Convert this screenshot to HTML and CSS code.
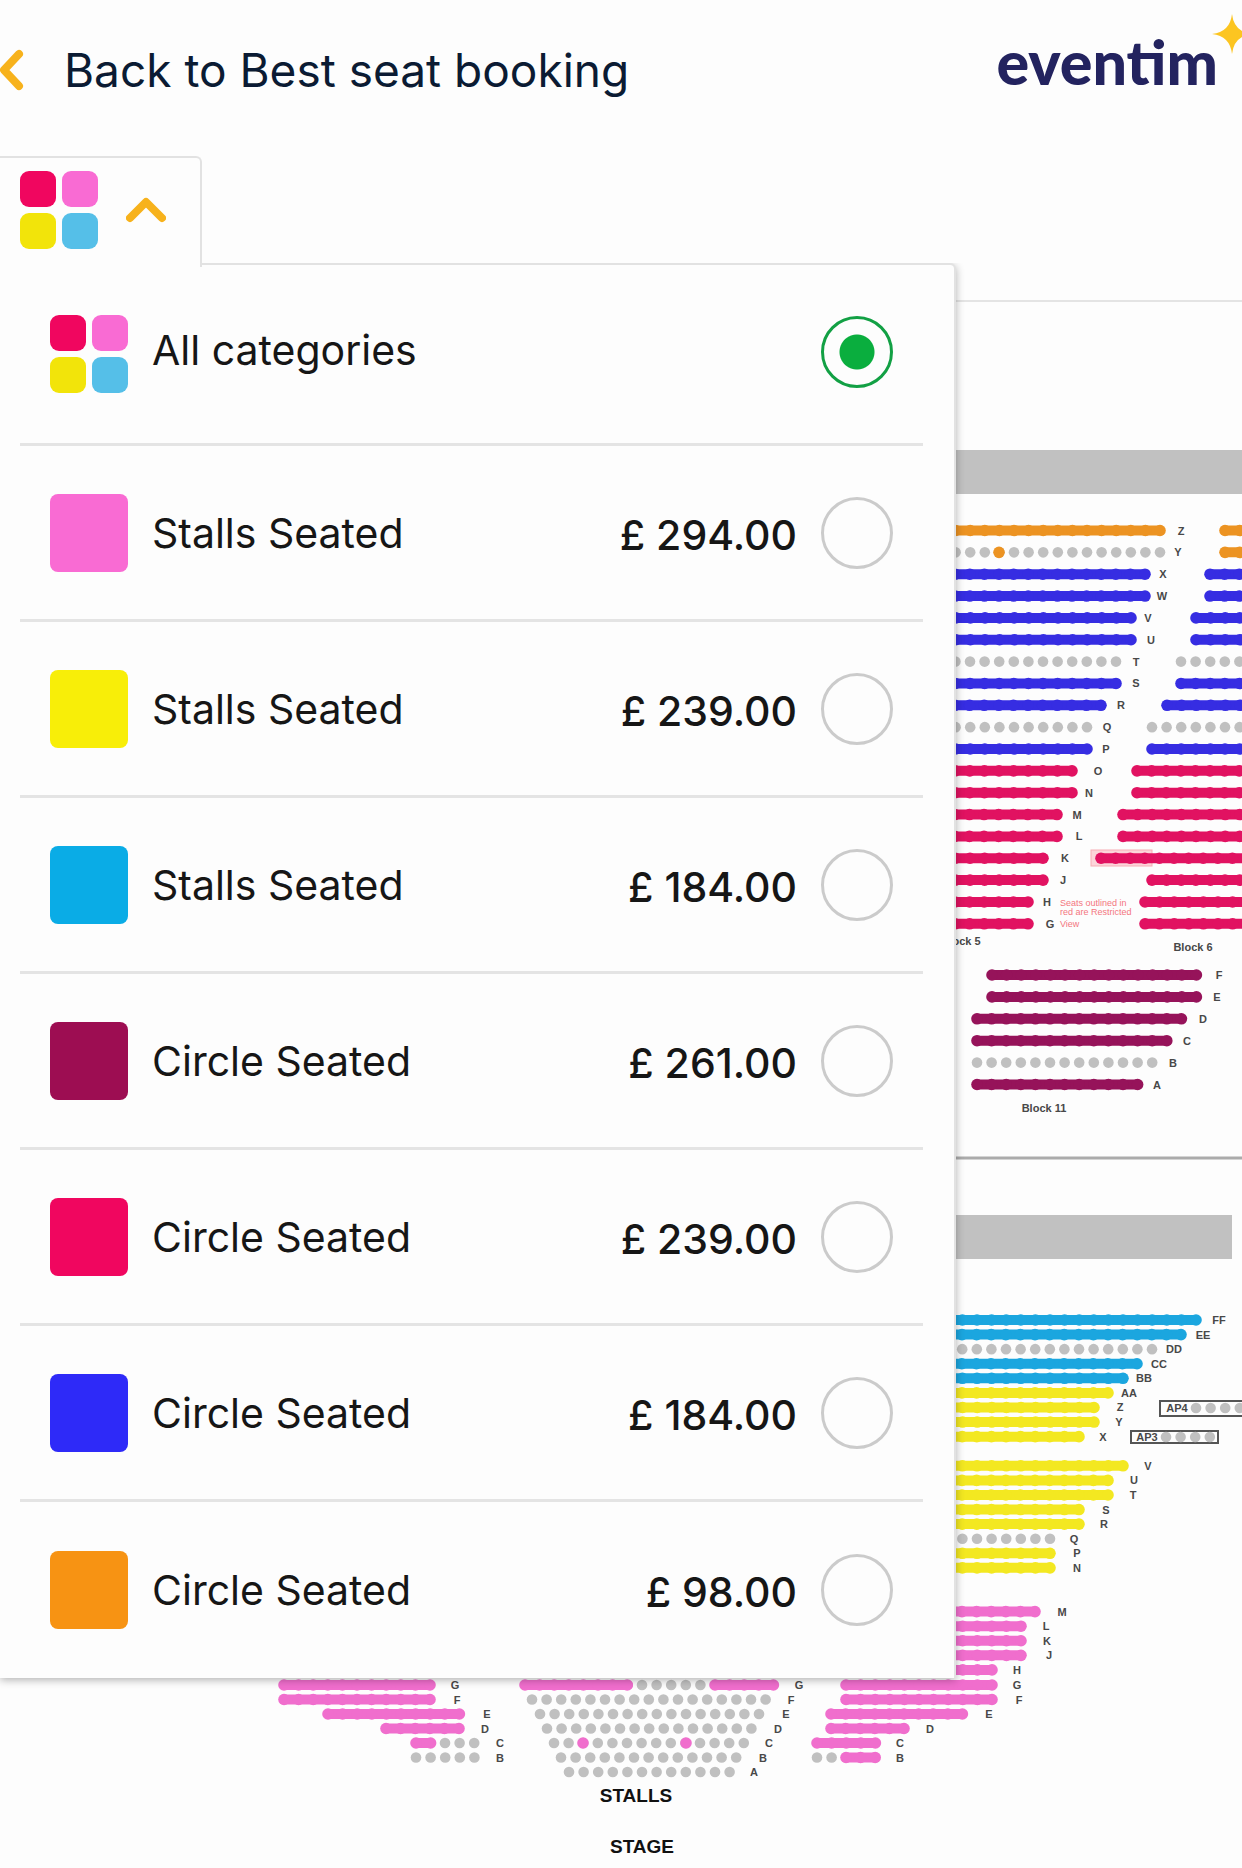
FILE: index.html
```html
<!DOCTYPE html>
<html lang="en">
<head>
<meta charset="utf-8">
<meta name="viewport" content="width=device-width, initial-scale=1">
<title>Seat map – eventim</title>
<link rel="stylesheet" href="styles.css">
</head>
<body>
<header class="header">
  <a class="back" href="#">
    <svg class="back-icon" viewBox="0 0 24 44" aria-hidden="true"><path d="M19 6 4 22 19 38"/></svg>
    <span>Back to Best seat booking</span>
  </a>
  <a class="logo" href="#">eventim<svg class="logo-star" viewBox="0 0 40 40" aria-hidden="true"><path d="M20 0Q22 18 40 20Q22 22 20 40Q18 22 0 20Q18 18 20 0Z"/></svg></a>
</header>
<main>
  <div class="toolbar">
    <button class="tab" type="button" aria-expanded="true" aria-controls="categories" aria-label="Price categories">
      <span class="quad"><i class="crimson"></i><i class="pink"></i><i class="lemon"></i><i class="sky"></i></span>
      <svg class="tab-icon" viewBox="0 0 40 26" aria-hidden="true"><path d="M4 21 20 5 36 21"/></svg>
    </button>
    <form class="menu" id="categories">
      <label class="option"><span class="quad"><i class="crimson"></i><i class="pink"></i><i class="lemon"></i><i class="sky"></i></span><span class="name">All categories</span><input type="radio" name="category" checked></label>
      <label class="option"><span class="swatch pink"></span><span class="name">Stalls Seated</span><span class="price">£ 294.00</span><input type="radio" name="category"></label>
      <label class="option"><span class="swatch yellow"></span><span class="name">Stalls Seated</span><span class="price">£ 239.00</span><input type="radio" name="category"></label>
      <label class="option"><span class="swatch blue"></span><span class="name">Stalls Seated</span><span class="price">£ 184.00</span><input type="radio" name="category"></label>
      <label class="option"><span class="swatch plum"></span><span class="name">Circle Seated</span><span class="price">£ 261.00</span><input type="radio" name="category"></label>
      <label class="option"><span class="swatch crimson"></span><span class="name">Circle Seated</span><span class="price">£ 239.00</span><input type="radio" name="category"></label>
      <label class="option"><span class="swatch indigo"></span><span class="name">Circle Seated</span><span class="price">£ 184.00</span><input type="radio" name="category"></label>
      <label class="option"><span class="swatch orange"></span><span class="name">Circle Seated</span><span class="price">£ 98.00</span><input type="radio" name="category"></label>
    </form>
  </div>
  <svg class="map" id="map" viewBox="0 302 1242 1566" role="img" aria-label="Seating plan">
    <rect class="block" x="300" y="450" width="942" height="44"/>
    <rect class="block" x="40" y="1215" width="1192" height="44"/>
    <path class="divider" d="M0 1158H1242"/>
    <rect class="restricted" x="1091" y="850" width="61" height="16"/>
    <rect class="box" x="1160" y="1401" width="90" height="15"/>
    <rect class="box" x="1131" y="1431" width="87" height="12"/>
    <g id="seats"></g>
    <g class="note"><text x="1060" y="906">Seats outlined in</text><text x="1060" y="915">red are Restricted</text><text x="1060" y="927">View</text></g>
    <g class="area"><text x="961" y="945">Block 5</text><text x="1193" y="951">Block 6</text><text x="1044" y="1112">Block 11</text></g>
    <g class="level"><text x="636" y="1802">STALLS</text><text x="642" y="1853">STAGE</text></g>
  </svg>
</main>
<script src="map.js"></script>
</body>
</html>
```
FILE: styles.css
```css
* { box-sizing: border-box; }

body {
  margin: 0;
  background: #fdfdfd;
  color: #161616;
  font-family: Inter, "Liberation Sans", sans-serif;
  overflow-x: hidden;
}

.header {
  display: flex;
  align-items: center;
  justify-content: space-between;
  height: 156px;
  padding: 0 24px 16px 0;
}

.back {
  display: flex;
  align-items: center;
  gap: 40px;
  color: #0b1b33;
  font-size: 46px;
  line-height: 56px;
  text-decoration: none;
}

.back-icon { width: 24px; height: 44px; }

.back-icon path,
.tab-icon path {
  fill: none;
  stroke: #f7b21c;
  stroke-width: 8;
  stroke-linecap: round;
  stroke-linejoin: round;
}

.logo {
  position: relative;
  margin-bottom: 16px;
  color: #23235f;
  font: 900 61px/72px Lato, sans-serif;
  text-decoration: none;
}

.logo-star {
  position: absolute;
  top: -12px;
  right: -34px;
  width: 40px;
  height: 40px;
  fill: #fcc521;
}

.toolbar {
  position: relative;
  z-index: 1;
  height: 146px;
  border-bottom: 2px solid #e4e4e4;
}

.tab {
  position: relative;
  z-index: 1;
  display: flex;
  align-items: center;
  gap: 28px;
  width: 202px;
  height: 111px;
  padding: 0 0 6px 20px;
  border: solid #e2e2e2;
  border-width: 2px 2px 0 0;
  border-radius: 0 6px 0 0;
  background: #fdfdfd;
}

.tab-icon { width: 40px; height: 26px; }

.quad {
  display: grid;
  grid-template-columns: 36px 36px;
  grid-auto-rows: 36px;
  gap: 6px;
}

.quad i { border-radius: 9px; }

.menu {
  position: absolute;
  top: 107px;
  left: 0;
  width: 956px;
  max-width: 100%;
  padding: 0 31px 0 20px;
  border: solid #e2e2e2;
  border-width: 2px 2px 0 0;
  border-radius: 0 6px 0 0;
  background: #fdfdfd;
  box-shadow: 0 2px 8px rgba(0, 0, 0, 0.3);
  clip-path: inset(0 -12px -12px 0);
}

.option {
  display: flex;
  align-items: center;
  height: 176px;
  padding: 0 30px;
  border-bottom: 3px solid #e4e4e4;
  font-size: 41px;
  line-height: 48px;
}

.option:first-child { height: 181px; }
.option:first-child .name { padding-bottom: 8px; }
.option:first-child input { margin-bottom: 4px; }
.option:last-child { border-bottom: 0; }

.swatch { width: 78px; height: 78px; border-radius: 8px; }

.name { flex: 1; padding-left: 24px; }

.price { padding-top: 4px; font-weight: 500; }

.option input {
  appearance: none;
  width: 72px;
  height: 72px;
  margin: 0 0 0 24px;
  border: 3px solid #cbcbcb;
  border-radius: 50%;
}

.option input:checked {
  border-color: #12a044;
  background: radial-gradient(circle, #0aae3e 17px, transparent 18px);
}

.crimson { background: #f0065f; }
.pink { background: #f96bd3; }
.lemon { background: #f2e40a; }
.sky { background: #55bfe8; }
.yellow { background: #f8ee08; }
.blue { background: #0aace6; }
.plum { background: #9d0d52; }
.indigo { background: #2e2af8; }
.orange { background: #f79313; }

.map { display: block; width: 100%; height: auto; }
.block { fill: #c1c1c1; }
.divider { stroke: #ababab; stroke-width: 3; }
.restricted { fill: #fcd5da; stroke: #f7aeb6; }
.box { fill: #fdfdfd; stroke: #555; stroke-width: 2; }

.row { fill: none; stroke-linecap: round; }

.map text { font-family: "Liberation Sans", Arial, sans-serif; }
.seat-label { fill: #484848; font-size: 11px; font-weight: 700; text-anchor: middle; }
.note { fill: #f47680; font-size: 9px; }
.area { fill: #484848; font-size: 11px; font-weight: 700; text-anchor: middle; }
.level { fill: #111; font-size: 19px; font-weight: 700; text-anchor: middle; }
```
FILE: map.js
```js
const PITCH = 14.6;
const COLORS = {
  o: '#ec9322', b: '#362de2', c: '#e11261', p: '#96135a',
  s: '#1ba6df', y: '#f3e821', k: '#f06ecd', g: '#c0c0c0'
};

// Runs of seats: colour, centre of first seat, centre of last seat, y
const runs = [];
// Row letters: text, centre x, centre y
const labels = [];

// Circle: colour, letter, last seat left of the aisle, letter x, first seat right of it
[
  ['o', 'Z', 1160, 1181, 1225], ['g', 'Y', 1160, 1178, 1225],
  ['b', 'X', 1145, 1163, 1210], ['b', 'W', 1145, 1162, 1210],
  ['b', 'V', 1131, 1148, 1196], ['b', 'U', 1131, 1151, 1196],
  ['g', 'T', 1116, 1136, 1181], ['b', 'S', 1116, 1136, 1181],
  ['b', 'R', 1101, 1121, 1167], ['g', 'Q', 1087, 1107, 1152],
  ['b', 'P', 1087, 1106, 1152], ['c', 'O', 1072, 1098, 1137],
  ['c', 'N', 1072, 1089, 1137], ['c', 'M', 1057, 1077, 1123],
  ['c', 'L', 1057, 1079, 1123], ['c', 'K', 1043, 1065, 1101],
  ['c', 'J', 1043, 1063, 1152], ['c', 'H', 1028, 1047, 1145],
  ['c', 'G', 1028, 1050, 1145]
].forEach(([color, letter, last, lx, first], i) => {
  const y = 530.5 + i * 21.85;
  runs.push([color, last - 20 * PITCH, last, y]);
  runs.push([letter === 'Y' ? 'o' : color, first, first + 11 * PITCH, y]);
  labels.push([letter, lx, y]);
});
runs.push(['o', 999, 999, 552.35]);

// Block 11
[
  ['p', 'F', 992, 1196, 1219], ['p', 'E', 992, 1196, 1217],
  ['p', 'D', 977, 1181, 1203], ['p', 'C', 977, 1167, 1187],
  ['g', 'B', 977, 1152, 1173], ['p', 'A', 977, 1137, 1157]
].forEach(([color, letter, first, last, lx], i) => {
  const y = 975 + i * 21.9;
  runs.push([color, first, last, y]);
  labels.push([letter, lx, y]);
});

// Stalls, right-hand side: colour, letter, last seat, letter x, row number from the back
[
  ['s', 'FF', 1196, 1219, 0], ['s', 'EE', 1181, 1203, 1],
  ['g', 'DD', 1152, 1174, 2], ['s', 'CC', 1137, 1159, 3],
  ['s', 'BB', 1123, 1144, 4], ['y', 'AA', 1108, 1129, 5],
  ['y', 'Z', 1094, 1120, 6], ['y', 'Y', 1094, 1119, 7],
  ['y', 'X', 1079, 1103, 8], ['y', 'V', 1123, 1148, 10],
  ['y', 'U', 1108, 1134, 11], ['y', 'T', 1108, 1133, 12],
  ['y', 'S', 1079, 1106, 13], ['y', 'R', 1079, 1104, 14],
  ['g', 'Q', 1050, 1074, 15], ['y', 'P', 1050, 1077, 16],
  ['y', 'N', 1050, 1077, 17], ['k', 'M', 1035, 1062, 20],
  ['k', 'L', 1021, 1046, 21], ['k', 'K', 1021, 1047, 22],
  ['k', 'J', 1021, 1049, 23], ['k', 'H', 992, 1017, 24]
].forEach(([color, letter, last, lx, n]) => {
  const y = 1320 + n * 14.58;
  runs.push([color, last - Math.round((last - 947) / PITCH) * PITCH, last, y]);
  labels.push([letter, lx, y]);
});

// Stalls, front rows
const front = {
  G: [['k', 284, 430], ['k', 525, 628], ['g', 642, 701], ['k', 715, 773], ['k', 846, 992]],
  F: [['k', 284, 430], ['g', 532, 766], ['k', 846, 992]],
  E: [['k', 328, 459], ['g', 540, 759], ['k', 831, 962]],
  D: [['k', 386, 459], ['g', 547, 752], ['k', 831, 904]],
  C: [['k', 416, 430], ['g', 445, 474], ['g', 554, 744], ['k', 583, 583], ['k', 686, 686], ['k', 817, 875]],
  B: [['g', 416, 474], ['g', 561, 737], ['g', 817, 831], ['k', 846, 875]],
  A: [['g', 569, 730]]
};
const frontLabels = {
  G: [455, 799, 1017], F: [457, 791, 1019], E: [487, 786, 989],
  D: [485, 778, 930], C: [500, 769, 900], B: [500, 763, 900], A: [754]
};
Object.keys(front).forEach((letter, i) => {
  const y = 1685 + i * 14.5;
  front[letter].forEach(([color, a, b]) => runs.push([color, a, b, y]));
  frontLabels[letter].forEach(x => labels.push([letter, x, y]));
});

// Accessible platforms
runs.push(['g', 1196, 1240, 1408], ['g', 1166, 1210, 1437]);
labels.push(['AP4', 1177, 1408], ['AP3', 1147, 1437]);

const NS = 'http://www.w3.org/2000/svg';
const seats = document.getElementById('seats');

function add(name, attrs, text) {
  const el = document.createElementNS(NS, name);
  for (const key in attrs) el.setAttribute(key, attrs[key]);
  if (text) el.textContent = text;
  seats.appendChild(el);
}

for (const [color, a, b, y] of runs) {
  if (color !== 'g' && b > a) {
    add('path', { class: 'row', d: `M${a} ${y}H${b}`, stroke: COLORS[color], 'stroke-width': 10 });
  }
  const count = Math.round((b - a) / PITCH);
  for (let i = 0; i <= count; i++) {
    add('circle', {
      cx: a + i * PITCH, cy: y, r: color === 'g' ? 5.3 : 5.8, fill: COLORS[color]
    });
  }
}
for (const [text, x, y] of labels) {
  add('text', { class: 'seat-label', x, y: y + 4 }, text);
}
```
